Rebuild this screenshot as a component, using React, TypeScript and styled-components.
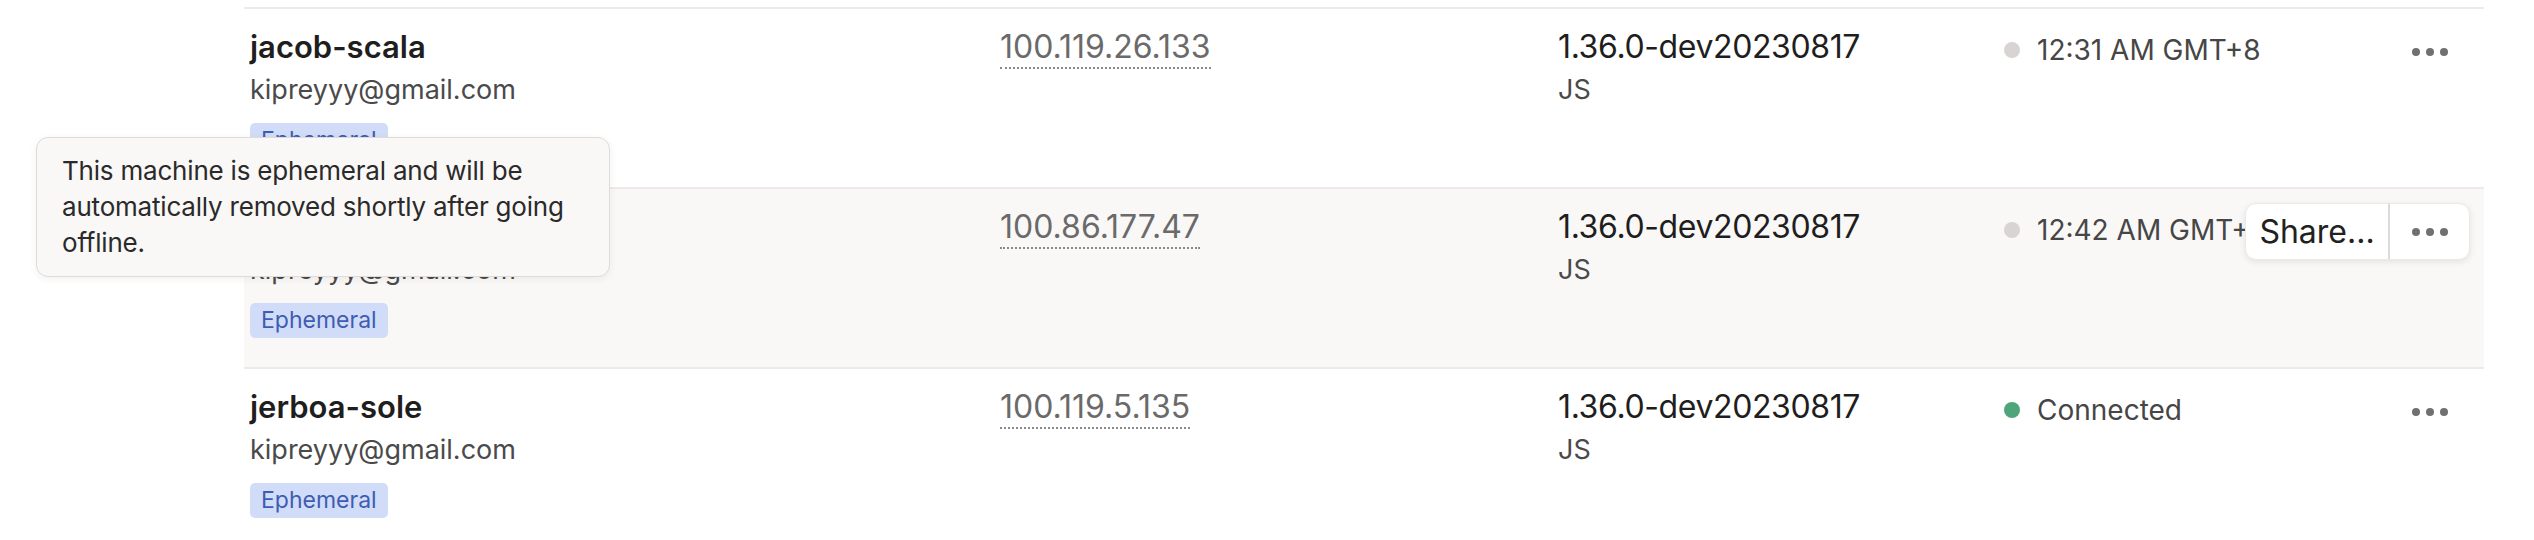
import React from "react";
import styled, { createGlobalStyle } from "styled-components";

const GlobalStyle = createGlobalStyle`
  html, body { margin: 0; padding: 0; background: #ffffff; }
  body {
    font-family: Inter, "Liberation Sans", sans-serif;
    color: #1f1e1e;
    overflow: hidden;
    -webkit-font-smoothing: antialiased;
  }
`;

const Page = styled.div`
  position: relative;
  width: 2534px;
  height: 540px;
  overflow: hidden;
  box-sizing: border-box;
  padding: 7px 50px 0 244px;
`;

const Table = styled.div`
  display: flex;
  flex-direction: column;
`;

const Row = styled.div<{ $hover?: boolean }>`
  display: grid;
  grid-template-columns: 750px 558px 446px 1fr 81px;
  height: 180px;
  flex-shrink: 0;
  box-sizing: border-box;
  border-top: 2px solid #eeeaea;
  padding: 0 14px 0 6px;
  background: ${(p) => (p.$hover ? "#f9f8f7" : "#ffffff")};
`;

const Cell = styled.div<{ $offset?: number }>`
  padding-top: ${(p) => 18 + (p.$offset ?? 0)}px;
  display: flex;
  flex-direction: column;
  align-items: flex-start;
  min-width: 0;
`;

const Name = styled.div`
  font-size: 31px;
  line-height: 40px;
  font-weight: 600;
  color: #1f1e1e;
`;

const SubText = styled.div`
  margin-top: 5px;
  font-size: 27px;
  line-height: 36px;
  color: #4b4a4a;
`;

const Badge = styled.span`
  margin-top: 15px;
  height: 35px;
  line-height: 35px;
  padding: 0 11px;
  border-radius: 5px;
  font-size: 23px;
  background: #d1ddf8;
  color: #3f5cb3;
`;

const Address = styled.span`
  display: inline-block;
  font-size: 32px;
  line-height: 40px;
  color: #6b6a6a;
  border-bottom: 2px dotted #8a8888;
`;

const Version = styled.div`
  font-size: 32px;
  line-height: 40px;
  letter-spacing: -0.38px;
  color: #1f1e1e;
`;

const Status = styled.div`
  display: flex;
  align-items: center;
  gap: 17px;
  height: 40px;
  font-size: 28px;
  color: #474646;
  white-space: nowrap;
`;

const Dot = styled.span<{ $online?: boolean }>`
  width: 16px;
  height: 16px;
  border-radius: 50%;
  flex-shrink: 0;
  background: ${(p) => (p.$online ? "#4fa57a" : "#d8d4d4")};
`;

const ActionsCell = styled.div`
  padding-top: 14px;
`;

const ActionsAnchor = styled.div`
  position: relative;
  width: 81px;
  height: 57px;
`;

const MenuButton = styled.div<{ $grouped?: boolean }>`
  display: flex;
  align-items: center;
  justify-content: center;
  box-sizing: border-box;
  width: ${(p) => (p.$grouped ? "79px" : "81px")};
  height: ${(p) => (p.$grouped ? "55px" : "57px")};
  color: #707070;
`;

const HoverGroup = styled.div`
  position: absolute;
  top: 0;
  right: 0;
  display: flex;
  align-items: stretch;
  height: 57px;
  box-sizing: border-box;
  background: #ffffff;
  border: 1px solid #ebe8e8;
  border-radius: 11px;
  box-shadow: 0 2px 7px rgba(0, 0, 0, 0.09);
`;

const ShareButton = styled.div`
  display: flex;
  align-items: center;
  justify-content: center;
  width: 142px;
  font-size: 32px;
  color: #222121;
  border-right: 2px solid #dcd9d9;
`;

const Tooltip = styled.div`
  position: absolute;
  left: 36px;
  top: 137px;
  width: 574px;
  box-sizing: border-box;
  padding: 15px 25px;
  background: #f9f8f7;
  border: 1px solid #dedbd9;
  border-radius: 12px;
  box-shadow: 0 2px 8px rgba(0, 0, 0, 0.06);
  font-size: 26px;
  line-height: 36px;
  letter-spacing: -0.2px;
  color: #2b2a2a;
`;

const Dots = () => (
  <svg width="36" height="8" viewBox="0 0 36 8" fill="currentColor">
    <circle cx="4" cy="4" r="4" />
    <circle cx="18" cy="4" r="4" />
    <circle cx="32" cy="4" r="4" />
  </svg>
);

type Machine = {
  name: string;
  email: string;
  ip: string;
  version: string;
  os: string;
  status: string;
  online?: boolean;
  hover?: boolean;
};

const machines: Machine[] = [
  {
    name: "jacob-scala",
    email: "kipreyyy@gmail.com",
    ip: "100.119.26.133",
    version: "1.36.0-dev20230817",
    os: "JS",
    status: "12:31 AM GMT+8",
  },
  {
    name: "jaguar-tuna",
    email: "kipreyyy@gmail.com",
    ip: "100.86.177.47",
    version: "1.36.0-dev20230817",
    os: "JS",
    status: "12:42 AM GMT+8",
    hover: true,
  },
  {
    name: "jerboa-sole",
    email: "kipreyyy@gmail.com",
    ip: "100.119.5.135",
    version: "1.36.0-dev20230817",
    os: "JS",
    status: "Connected",
    online: true,
  },
];

export default function App() {
  return (
    <>
      <GlobalStyle />
      <Page>
        <Table>
          {machines.map((m) => (
            <Row key={m.ip} $hover={m.hover}>
              <Cell>
                <Name>{m.name}</Name>
                <SubText>{m.email}</SubText>
                <Badge>Ephemeral</Badge>
              </Cell>
              <Cell>
                <Address>{m.ip}</Address>
              </Cell>
              <Cell>
                <Version>{m.version}</Version>
                <SubText>{m.os}</SubText>
              </Cell>
              <Cell $offset={3}>
                <Status>
                  <Dot $online={m.online} />
                  {m.status}
                </Status>
              </Cell>
              <ActionsCell>
                <ActionsAnchor>
                  {m.hover ? (
                    <HoverGroup>
                      <ShareButton>Share...</ShareButton>
                      <MenuButton $grouped>
                        <Dots />
                      </MenuButton>
                    </HoverGroup>
                  ) : (
                    <MenuButton>
                      <Dots />
                    </MenuButton>
                  )}
                </ActionsAnchor>
              </ActionsCell>
            </Row>
          ))}
        </Table>
        <Tooltip>
          This machine is ephemeral and will be automatically removed shortly
          after going offline.
        </Tooltip>
      </Page>
    </>
  );
}
